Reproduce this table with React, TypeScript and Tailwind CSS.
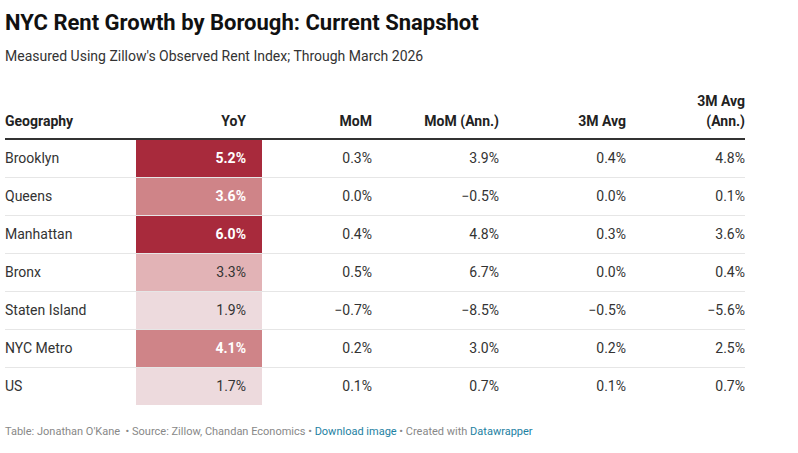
const rows = [
    { geo: "Brooklyn", yoy: "5.2%", bg: "bg-[#a82a3c]", dark: true, mom: "0.3%", momAnn: "3.9%", avg: "0.4%", avgAnn: "4.8%" },
    { geo: "Queens", yoy: "3.6%", bg: "bg-[#cf8488]", dark: true, mom: "0.0%", momAnn: "−0.5%", avg: "0.0%", avgAnn: "0.1%" },
    { geo: "Manhattan", yoy: "6.0%", bg: "bg-[#a82a3c]", dark: true, mom: "0.4%", momAnn: "4.8%", avg: "0.3%", avgAnn: "3.6%" },
    { geo: "Bronx", yoy: "3.3%", bg: "bg-[#e2b3b6]", dark: false, mom: "0.5%", momAnn: "6.7%", avg: "0.0%", avgAnn: "0.4%" },
    { geo: "Staten Island", yoy: "1.9%", bg: "bg-[#eddadd]", dark: false, mom: "−0.7%", momAnn: "−8.5%", avg: "−0.5%", avgAnn: "−5.6%" },
    { geo: "NYC Metro", yoy: "4.1%", bg: "bg-[#cf8488]", dark: true, mom: "0.2%", momAnn: "3.0%", avg: "0.2%", avgAnn: "2.5%" },
    { geo: "US", yoy: "1.7%", bg: "bg-[#eddadd]", dark: false, mom: "0.1%", momAnn: "0.7%", avg: "0.1%", avgAnn: "0.7%" },
]

export default function App() {
    return <div className="w-[798px] h-[453px] bg-white px-[5px] pt-[9px] text-[#333] [font-family:Roboto,'Liberation_Sans',sans-serif]">
        <h1 className="text-[22px] leading-[28px] font-bold text-[#111]">NYC Rent Growth by Borough: Current Snapshot</h1>
        <p className="mt-[10px] text-[14px] leading-[18px] text-[#333]">Measured Using Zillow's Observed Rent Index; Through March 2026</p>
        <table className="mt-[26px] w-[740px] border-collapse text-[14px] table-fixed">
            <colgroup>
                <col className="w-[131px]" />
                <col className="w-[126px]" />
                <col className="w-[126px]" />
                <col className="w-[127px]" />
                <col className="w-[127px]" />
                <col className="w-[103px]" />
            </colgroup>
            <thead>
                <tr className="border-b-2 border-[#333] align-bottom font-bold text-[14px] leading-[20px] text-[#222]">
                    <th className="text-left pb-[7px] font-bold">Geography</th>
                    <th className="text-right pr-4 pb-[7px] font-bold">YoY</th>
                    <th className="text-right pr-4 pb-[7px] font-bold">MoM</th>
                    <th className="text-right pr-4 pb-[7px] font-bold">MoM (Ann.)</th>
                    <th className="text-right pr-4 pb-[7px] font-bold">3M Avg</th>
                    <th className="text-right pb-[7px] font-bold">3M Avg<br />(Ann.)</th>
                </tr>
            </thead>
            <tbody>
                {rows.map((r, i) => (
                    <tr key={r.geo} className={`h-[38px] ${i < rows.length - 1 ? "border-b border-[#e6e6e6]" : ""}`}>
                        <td className="text-left">{r.geo}</td>
                        <td className={`text-right pr-4 ${r.bg} ${r.dark ? "text-white font-bold" : "text-[#333]"}`}>{r.yoy}</td>
                        <td className="text-right pr-4">{r.mom}</td>
                        <td className="text-right pr-4">{r.momAnn}</td>
                        <td className="text-right pr-4">{r.avg}</td>
                        <td className="text-right">{r.avgAnn}</td>
                    </tr>
                ))}
            </tbody>
        </table>
        <p className="mt-[20px] text-[11px] leading-[14px] text-[#888]">
            Table: Jonathan O'Kane &nbsp;• Source: Zillow, Chandan Economics • <span className="text-[#1d81a2]">Download image</span> • Created with <span className="text-[#1d81a2]">Datawrapper</span>
        </p>
    </div>
}
